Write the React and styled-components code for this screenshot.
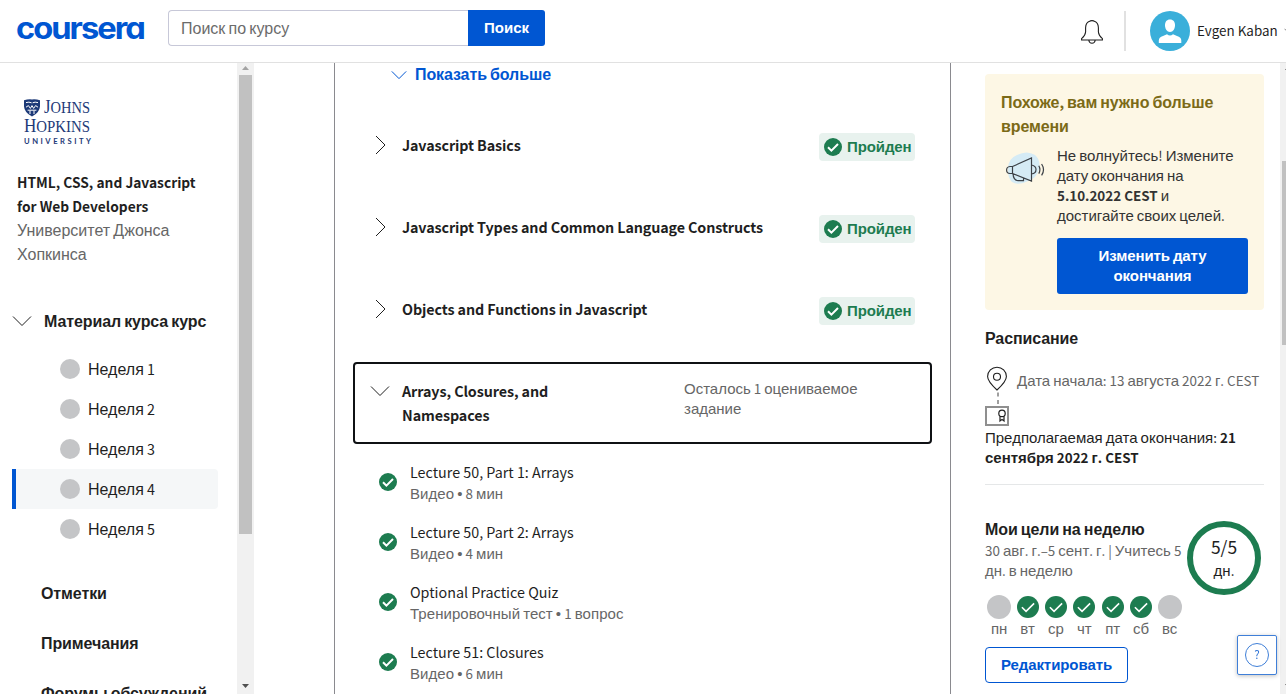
import React from "react";
import styled, { createGlobalStyle } from "styled-components";

const BLUE = "#0056d2";
const GREEN = "#1d7c50";
const INK = "#1f1f1f";
const GREY = "#666";

const GlobalStyle = createGlobalStyle`
  *, *::before, *::after { box-sizing: border-box; }
  html, body { margin: 0; height: 100%; overflow: hidden; background: #fff; }
  body {
    font-family: "Liberation Sans", "Noto Sans CJK SC", sans-serif;
    font-size: 16px;
    color: ${INK};
  }
  svg { display: block; flex: none; }
  h2, h3, p { margin: 0; font: inherit; }
  button { font: inherit; padding: 0; }
`;

/* Latin letters and digits are set in a humanist face, Cyrillic in the Arial-like one. */
const Latin = styled.span`
  font-family: "Noto Sans CJK SC", sans-serif;
  font-size: 0.895em;
  line-height: 0;
`;

const T = ({ children }) =>
  children.split(/([\u0400-\u04ff•]+)/).map((part, i) =>
    i % 2 || !part ? part : <Latin key={i}>{part}</Latin>
  );

const Text = styled.div`
  font-size: ${(p) => p.$size || 16}px;
  line-height: ${(p) => p.$lh || 24}px;
  font-weight: ${(p) => (p.$bold ? 700 : 400)};
  color: ${(p) => p.$color || "inherit"};
  letter-spacing: ${(p) => p.$ls || 0}px;
  white-space: nowrap;
`;

/* ---------- header ---------- */

const Page = styled.div`
  display: flex;
  flex-direction: column;
  width: 100vw;
  height: 100vh;
  overflow: hidden;
`;

const Header = styled.header`
  display: flex;
  align-items: flex-start;
  flex: none;
  height: 63px;
  border-bottom: 1px solid #e1e1e1;
`;

const LogoLink = styled.div`
  width: 168px;
  padding: 10px 0 0 15px;
`;

const SearchForm = styled.div`
  display: flex;
  width: 377px;
  height: 36px;
  margin-top: 10px;
`;

const SearchField = styled.div`
  flex: 1;
  border: 1px solid #c7c8d8;
  border-right: 0;
  border-radius: 4px 0 0 4px;
  padding: 6px 12px;
`;

const SearchButton = styled.button`
  width: 77px;
  border: 0;
  border-radius: 0 3px 3px 0;
  background: ${BLUE};
  color: #fff;
`;

const UserArea = styled.div`
  display: flex;
  align-items: center;
  width: 206px;
  height: 40px;
  margin: 11px 0 0 auto;
  overflow: hidden;
`;

const BellSlot = styled.div`
  flex: none;
  width: 44px;
`;

const HeaderRule = styled.div`
  flex: none;
  width: 2px;
  height: 40px;
  margin-right: 24px;
  background: #e1e1e1;
`;

const UserName = styled(Text)`
  margin: 0 6px 0 7px;
`;

/* ---------- columns ---------- */

const Body = styled.div`
  display: flex;
  flex: 1;
  min-height: 0;
`;

const Sidebar = styled.nav`
  flex: none;
  width: 237px;
  overflow: hidden;
`;

const ScrollTrack = styled.div`
  display: flex;
  flex-direction: column;
  align-items: center;
  flex: none;
  width: 17px;
  margin-left: ${(p) => p.$ml || 0}px;
  padding: 3px 0 6px;
  background: #f1f1f1;
`;

const ScrollThumb = styled.div`
  width: 13px;
  height: ${(p) => p.$h}px;
  margin-top: ${(p) => p.$top}px;
  margin-bottom: auto;
  background: #c1c1c1;
`;

const School = styled.div`
  padding: 35px 0 0 22px;
  height: 108px;
`;

const CourseInfo = styled.div`
  height: 138px;
  padding-left: 17px;
`;

const SectionHead = styled.div`
  display: flex;
  align-items: center;
  height: 24px;
  padding-left: 12px;
  gap: 12px;
  margin-bottom: 16px;
`;

const Label = styled(Text)`
  padding-top: 2px;
`;

const Week = styled.div`
  display: flex;
  align-items: center;
  gap: 8px;
  width: 206px;
  height: 40px;
  margin-left: 12px;
  padding-left: 44px;
  border-left: 4px solid ${(p) => (p.$active ? BLUE : "transparent")};
  border-radius: 0 4px 4px 0;
  background: ${(p) => (p.$active ? "#f5f7f8" : "transparent")};
  background-clip: padding-box;
`;

const Dot = styled.span`
  flex: none;
  width: ${(p) => p.$size}px;
  height: ${(p) => p.$size}px;
  border-radius: 50%;
  background: #c4c5c7;
`;

const NavLinks = styled.div`
  display: flex;
  flex-direction: column;
  gap: 26px;
  padding: 33px 0 0 41px;
`;

const Main = styled.main`
  flex: none;
  width: 617px;
  margin-left: 80px;
  padding: 0 18px;
  border: solid #8a8a8f;
  border-width: 0 1px;
  overflow: hidden;
`;

const ShowMore = styled.div`
  display: flex;
  align-items: center;
  height: 24px;
  padding-left: 38px;
  gap: 8px;
  color: ${BLUE};
`;

const Module = styled.section`
  display: flex;
  height: 82px;
  padding: 16px 15px 0 15px;
  border: 2px solid ${(p) => (p.$open ? "#0f1114" : "transparent")};
  border-radius: 4px;
`;

const ModuleList = styled.div`
  padding-top: 29px;
`;

const ModuleIcon = styled.div`
  width: 32px;
  padding-top: 1px;
`;

const ModuleTitle = styled(Text)`
  width: ${(p) => p.$w || "auto"};
  white-space: normal;
`;

const Remaining = styled(Text)`
  margin: -1px auto 0 98px;
`;

const Badge = styled.div`
  display: flex;
  align-items: center;
  gap: 5px;
  flex: none;
  width: 96px;
  height: 28px;
  margin: -1px 0 0 auto;
  padding-left: 5px;
  border-radius: 4px;
  background: #e8f2ee;
`;

const Lesson = styled.div`
  display: flex;
  align-items: center;
  gap: 13px;
  height: 60px;
  padding-left: 26px;
`;

const LessonText = styled.div`
  padding-top: 2px;
`;

const LessonList = styled.div`
  padding-top: 8px;
`;

/* ---------- right column ---------- */

const Aside = styled.aside`
  flex: none;
  width: 279px;
  margin-left: 34px;
  padding-top: 11px;
`;

const Notice = styled.div`
  height: 236px;
  padding: 17px 16px 16px;
  border-radius: 4px;
  background: #fdf7e5;
`;

const NoticeBody = styled.div`
  display: flex;
  padding-top: 7px;
`;

const NoticeArt = styled.div`
  width: 56px;
  padding: 5px 0 0 4px;
`;

const PrimaryButton = styled.button`
  display: block;
  width: 191px;
  height: 56px;
  margin-top: 12px;
  border: 0;
  border-radius: 3px;
  background: ${BLUE};
  color: #fff;
`;

const Schedule = styled.section`
  height: 175px;
  padding-top: 17px;
  border-bottom: 1px solid #e5e7e8;
`;

const StartRow = styled.div`
  display: flex;
  gap: 7px;
  height: 64px;
  margin-top: 13px;
`;

const StartDate = styled(Text)`
  margin-top: 7px;
`;

const Goals = styled.section`
  padding-top: 33px;
`;

const GoalHead = styled.div`
  display: flex;
  height: 77px;
`;

const GoalText = styled.div`
  width: 201px;
`;

const GoalRange = styled(Text)`
  margin-top: -1px;
`;

const Ring = styled.div`
  flex: none;
  display: flex;
  flex-direction: column;
  align-items: center;
  width: 74px;
  height: 74px;
  margin: 3px 0 0 1px;
  padding-top: 9px;
  border: 6px solid ${GREEN};
  border-radius: 50%;
`;

const Days = styled.div`
  display: grid;
  grid-template-columns: repeat(7, 28.4px);
  height: 52px;
`;

const Day = styled.div`
  display: flex;
  flex-direction: column;
  align-items: center;
`;

const DayMark = styled.div`
  display: grid;
  place-items: center;
  height: 24px;
`;

const OutlineButton = styled.button`
  width: 143px;
  height: 36px;
  border: 1px solid ${BLUE};
  border-radius: 4px;
  background: #fff;
  color: ${BLUE};
`;

const Help = styled.div`
  position: fixed;
  right: 9px;
  bottom: 19px;
  display: grid;
  place-items: center;
  width: 40px;
  height: 40px;
  border: 1px solid #3f7fd8;
  border-radius: 2px;
  background: #fff;
  box-shadow: 0 1px 4px rgba(0, 0, 0, 0.25);
`;

const HelpMark = styled.div`
  display: grid;
  place-items: center;
  width: 24px;
  height: 24px;
  border: 1px solid #3f7fd8;
  border-radius: 50%;
  color: #2f73d5;
`;

/* ---------- drawings ---------- */

const CourseraLogo = () => (
  <svg width="132" height="40" viewBox="0 0 132 40">
    <text
      transform="translate(1 29) scale(1.055 .98)" fontSize="31" fontWeight="700" fill={BLUE}
      letterSpacing="-1.9"
      style={{ fontFamily: "Inter, sans-serif", fontFeatureSettings: '"cv11"' }}
    >
      coursera
    </text>
  </svg>
);

const HopkinsLogo = () => (
  <svg width="72" height="50" viewBox="0 0 72 50" fill="#1d3a78">
    <path d="M2 2.2Q6 1 10 1.4Q14 1 18 2.2V8.5Q17.6 14.5 10 18.6Q2.4 14.5 2 8.5Z" />
    <path
      d="M4 4.6Q7 3.6 9.6 4.8M10.6 4.8Q13 3.6 16 4.6M4 9.2L6.4 7.6L8.4 10.4L10 7.6L11.6 10.4L13.6 7.6L16 9.2M5.6 12.2H14.4M8 12.5V16M12 12.5V16"
      fill="none" stroke="#fff" strokeWidth="1"
    />
    <g style={{ fontFamily: '"Liberation Serif", serif' }} fontSize="19">
      <text x="22" y="15" textLength="46" lengthAdjust="spacingAndGlyphs">
        J<tspan fontSize="16.5">OHNS</tspan>
      </text>
      <text x="2" y="34" textLength="66" lengthAdjust="spacingAndGlyphs">
        H<tspan fontSize="16.5">OPKINS</tspan>
      </text>
    </g>
    <text
      x="2" y="45.6" fontSize="7.6" fontWeight="700" textLength="67"
      style={{ fontFamily: "Lato, sans-serif" }}
    >
      UNIVERSITY
    </text>
  </svg>
);

const BellIcon = () => (
  <svg width="24" height="26" viewBox="0 0 24 26" fill="none" stroke={INK} strokeWidth="1.1">
    <path d="M1.6 22H22.4V20.6Q18.8 18 18.4 14V9.8Q18.2 5 15 3.6Q13.6 2.6 12 2.6Q10.4 2.6 9 3.6Q5.8 5 5.6 9.8V14Q5.2 18 1.6 20.6ZM8.8 22.2Q9.2 25.2 12 25.2Q14.8 25.2 15.2 22.2" />
  </svg>
);

const Avatar = () => (
  <svg width="40" height="40" viewBox="0 0 40 40">
    <circle cx="20" cy="20" r="20" fill="#3aafda" />
    <g fill="#fff">
      <path d="M20 8.4C23.4 8.4 25 10.8 25 14.2C25 17.8 23 20.9 20 20.9C17 20.9 15 17.8 15 14.2C15 10.8 16.6 8.4 20 8.4Z" />
      <path d="M8.8 32V29.5Q8.8 26 13 25L17 23.2Q20 25.6 23 23.2L27 25Q31.3 26 31.3 29.5V32Z" />
    </g>
  </svg>
);

const Chevron = ({ size = 20, dir = "down", color = INK }) => (
  <svg
    width={size} height={size} viewBox="0 0 20 20" fill="none"
    stroke={color} strokeWidth={20 / size}
  >
    <path d={dir === "down" ? "M1 5.5L10 14.5L19 5.5" : "M6 1L15 10L6 19"} />
  </svg>
);

const CheckCircle = ({ size = 18 }) => (
  <svg width={size} height={size} viewBox="0 0 18 18">
    <circle cx="9" cy="9" r="9" fill={GREEN} />
    <path d="M4 9.2L7.4 12.6L14 6" fill="none" stroke="#fff" strokeWidth={size > 18 ? 1.3 : 2} />
  </svg>
);

const Megaphone = () => (
  <svg width="42" height="36" viewBox="0 0 42 36" fill="none" stroke="#3b4046" strokeWidth="1.2">
    <path
      d="M3 20Q2 8 12 4Q22 -1 30 4Q36 9 34 18Q32 27 23 30Q14 35 7 31Q3 27 3 20Z"
      fill="#d5ebf5" stroke="none"
    />
    <path d="M7.5 15.5L26.5 7V30L7.5 22.5ZM7.5 15.5H5Q1.6 15.8 1.6 19Q1.6 22.4 5 22.5H7.5M8 22.6Q8.4 29.5 13 29.6L18.5 29.6L18.6 27M26.5 14Q31 15 31 18.6Q31 22.6 26.5 23M33.8 14.8Q36 18.6 33.8 22.6M36.6 13Q40.4 18.6 36.6 24.4" />
  </svg>
);

const Timeline = () => (
  <svg width="25" height="66" viewBox="0 0 25 66" fill="none">
    <path
      d="M12 26Q2.6 17.5 2.6 12.6A9.4 9.4 0 0 1 21.4 12.6Q21.4 17.5 12 26Z"
      stroke={INK} strokeWidth="1.1"
    />
    <circle cx="12" cy="12.8" r="3.5" stroke={INK} strokeWidth="1.1" />
    <path d="M13 28.5V32.5M13 36V40" stroke="#888" strokeWidth="1.6" />
    <rect x="1" y="43" width="22" height="18" stroke="#8f8f8f" strokeWidth="2" />
    <circle cx="17" cy="49.4" r="3.2" stroke={INK} strokeWidth="1.2" />
    <path d="M15 52.2V57L17 55.4L19 57V52.2" stroke={INK} strokeWidth="1.2" />
  </svg>
);

const Arrow = ({ up, color }) => (
  <svg width="7" height="4" viewBox="0 0 7 4" fill={color}>
    <path d={up ? "M0 4L3.5 0L7 4Z" : "M0 0L3.5 4L7 0Z"} />
  </svg>
);

/* ---------- data ---------- */

const doneModules = [
  "Javascript Basics",
  "Javascript Types and Common Language Constructs",
  "Objects and Functions in Javascript",
];

const lessons = [
  ["Lecture 50, Part 1: Arrays", "Видео • 8 мин"],
  ["Lecture 50, Part 2: Arrays", "Видео • 4 мин"],
  ["Optional Practice Quiz", "Тренировочный тест • 1 вопрос"],
  ["Lecture 51: Closures", "Видео • 6 мин"],
];

const days = ["пн", "вт", "ср", "чт", "пт", "сб", "вс"];

export default function App() {
  return (
    <Page>
      <GlobalStyle />
      <Header>
        <LogoLink><CourseraLogo /></LogoLink>
        <SearchForm>
          <SearchField><Text $color="#6b6b6b"><T>Поиск по курсу</T></Text></SearchField>
          <SearchButton><Text $bold $size={15}>Поиск</Text></SearchButton>
        </SearchForm>
        <UserArea>
          <BellSlot><BellIcon /></BellSlot>
          <HeaderRule />
          <Avatar />
          <UserName $size={15}><T>Evgen Kaban</T></UserName>
          <Chevron size={10} color="#888" />
        </UserArea>
      </Header>

      <Body>
        <Sidebar>
          <School><HopkinsLogo /></School>
          <CourseInfo>
            <Text $bold $size={15.4}><T>HTML, CSS, and Javascript</T></Text>
            <Text $bold $size={15.4}><T>for Web Developers</T></Text>
            <Text $color={GREY}><T>Университет Джонса</T></Text>
            <Text $color={GREY}>Хопкинса</Text>
          </CourseInfo>
          <SectionHead>
            <Chevron />
            <Label $bold $ls={-0.1}><T>Материал курса курс</T></Label>
          </SectionHead>
          {[1, 2, 3, 4, 5].map((n) => (
            <Week key={n} $active={n === 4}>
              <Dot $size={20} />
              <Label><T>{`Неделя ${n}`}</T></Label>
            </Week>
          ))}
          <NavLinks>
            <Text $bold $ls={-0.1}>Отметки</Text>
            <Text $bold $ls={-0.1}>Примечания</Text>
            <Text $bold $ls={-0.1}><T>Форумы обсуждений</T></Text>
          </NavLinks>
        </Sidebar>
        <ScrollTrack>
          <Arrow up color="#a3a3a3" />
          <ScrollThumb $h={459} $top={5} />
          <Arrow color="#505050" />
        </ScrollTrack>

        <Main>
          <ShowMore>
            <Chevron size={16} color={BLUE} />
            <Text $bold $ls={-0.1}><T>Показать больше</T></Text>
          </ShowMore>
          <ModuleList>
            {doneModules.map((title) => (
              <Module key={title}>
                <ModuleIcon><Chevron dir="right" /></ModuleIcon>
                <ModuleTitle $bold $ls={-0.11}><T>{title}</T></ModuleTitle>
                <Badge>
                  <CheckCircle />
                  <Text $bold $size={15} $ls={-0.1} $color={GREEN}>Пройден</Text>
                </Badge>
              </Module>
            ))}
            <Module $open>
              <ModuleIcon><Chevron /></ModuleIcon>
              <ModuleTitle $bold $ls={-0.09} $w="184px"><T>Arrays, Closures, and Namespaces</T></ModuleTitle>
              <Remaining $size={15} $lh={20} $color={GREY}>
                <T>Осталось 1 оцениваемое</T><br />задание
              </Remaining>
            </Module>
          </ModuleList>
          <LessonList>
            {lessons.map(([title, meta]) => (
              <Lesson key={title}>
                <CheckCircle />
                <LessonText>
                  <Text $lh={21}><T>{title}</T></Text>
                  <Text $size={15} $lh={21} $ls={0.05} $color={GREY}><T>{meta}</T></Text>
                </LessonText>
              </Lesson>
            ))}
          </LessonList>
        </Main>

        <Aside>
          <Notice>
            <Text $bold $ls={-0.1} $color="#7b6a17"><T>Похоже, вам нужно больше</T><br />времени</Text>
            <NoticeBody>
              <NoticeArt><Megaphone /></NoticeArt>
              <div>
                <Text $size={15} $lh={20} $color="#333">
                  <T>Не волнуйтесь! Измените</T><br />
                  <T>дату окончания на</T><br />
                  <b><T>5.10.2022 CEST</T></b><T> и</T><br />
                  <T>достигайте своих целей.</T>
                </Text>
                <PrimaryButton>
                  <Text $bold $size={15} $lh={20} $ls={-0.1}><T>Изменить дату</T><br />окончания</Text>
                </PrimaryButton>
              </div>
            </NoticeBody>
          </Notice>

          <Schedule>
            <Text $bold $ls={-0.1}>Расписание</Text>
            <StartRow>
              <Timeline />
              <StartDate $size={15} $lh={20} $color={GREY}>
                <T>Дата начала: 13 августа 2022 г. CEST</T>
              </StartDate>
            </StartRow>
            <Text $size={15} $lh={20}>
              <T>Предполагаемая дата окончания: </T><b><T>21</T></b><br />
              <b><T>сентября 2022 г. CEST</T></b>
            </Text>
          </Schedule>

          <Goals>
            <GoalHead>
              <GoalText>
                <Text $bold $ls={-0.1}><T>Мои цели на неделю</T></Text>
                <GoalRange $size={15} $lh={20} $color={GREY}>
                  <T>30 авг. г.–5 сент. г. | Учитесь 5</T><br /><T>дн. в неделю</T>
                </GoalRange>
              </GoalText>
              <Ring>
                <Text $size={19.5} $lh={23}><T>5/5</T></Text>
                <Text $size={15} $lh={24}><T>дн.</T></Text>
              </Ring>
            </GoalHead>
            <Days>
              {days.map((d, i) => (
                <Day key={d}>
                  <DayMark>{i % 6 ? <CheckCircle size={22} /> : <Dot $size={24} />}</DayMark>
                  <Text $size={15} $lh={20} $color={GREY}>{d}</Text>
                </Day>
              ))}
            </Days>
            <OutlineButton><Text $bold $size={15} $ls={-0.08}>Редактировать</Text></OutlineButton>
          </Goals>
        </Aside>
        <ScrollTrack $ml={16}>
          <Arrow up color="#505050" />
          <ScrollThumb $h={184} $top={91} />
          <Arrow color="#505050" />
        </ScrollTrack>
      </Body>
      <Help><HelpMark><Text $size={13} $lh={14}><T>?</T></Text></HelpMark></Help>
    </Page>
  );
}
